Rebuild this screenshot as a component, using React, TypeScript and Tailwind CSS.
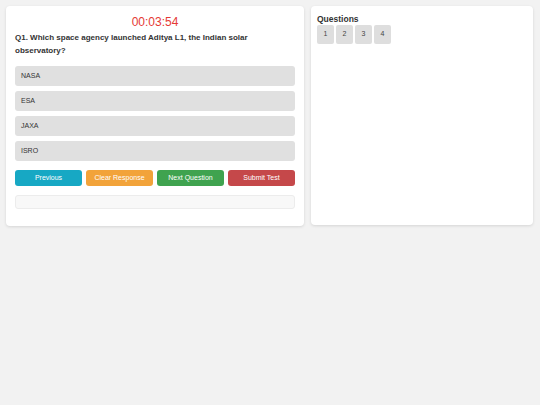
const options = ['NASA', 'ESA', 'JAXA', 'ISRO']

export default function App() {
  return (
    <div className="min-h-[405px] bg-[#f2f2f2] p-[6px] font-['Liberation_Sans',Arial,sans-serif] text-[#333]">
      <div className="flex items-start gap-[7px]">
        {/* Question panel */}
        <div className="w-[298px] rounded-[4px] bg-white px-[9px] pb-[17px] pt-[9px] shadow-[0_1px_3px_rgba(0,0,0,0.12)]">
          <div className="text-center text-[12px] leading-[14px] text-[#e53935]">00:03:54</div>
          <div className="mt-[2px] pr-[40px] text-[8px] font-bold leading-[13px] text-[#333]">
            Q1. Which space agency launched Aditya L1, the Indian solar observatory?
          </div>
          <div className="mt-[9px] flex flex-col gap-[5px]">
            {options.map((o) => (
              <div
                key={o}
                className="flex h-[20px] items-center rounded-[3px] bg-[#e0e0e0] px-[6px] text-[7px] text-[#333]"
              >
                {o}
              </div>
            ))}
          </div>
          <div className="mt-[9px] grid grid-cols-4 gap-[4px]">
            <button className="h-[16px] rounded-[3px] bg-[#17a8c4] text-[7px] text-white">Previous</button>
            <button className="h-[16px] rounded-[3px] bg-[#f2a33a] text-[7px] text-white">Clear Response</button>
            <button className="h-[16px] rounded-[3px] bg-[#3fa34f] text-[7px] text-white">Next Question</button>
            <button className="h-[16px] rounded-[3px] bg-[#c5484a] text-[7px] text-white">Submit Test</button>
          </div>
          <div className="mt-[9px] h-[14px] rounded-[3px] border border-[#ececec] bg-[#f8f8f8]" />
        </div>

        {/* Navigator */}
        <div className="h-[219px] w-[222px] rounded-[4px] bg-white px-[6px] pt-[8px] shadow-[0_1px_3px_rgba(0,0,0,0.12)]">
          <div className="text-[8.5px] font-bold leading-[10px] text-[#333]">Questions</div>
          <div className="mt-[1px] flex gap-[2px]">
            {[1, 2, 3, 4].map((n) => (
              <button
                key={n}
                className="flex h-[19px] w-[17px] items-center justify-center rounded-[2px] bg-[#dedede] text-[7px] text-[#444]"
              >
                {n}
              </button>
            ))}
          </div>
        </div>
      </div>
    </div>
  )
}
